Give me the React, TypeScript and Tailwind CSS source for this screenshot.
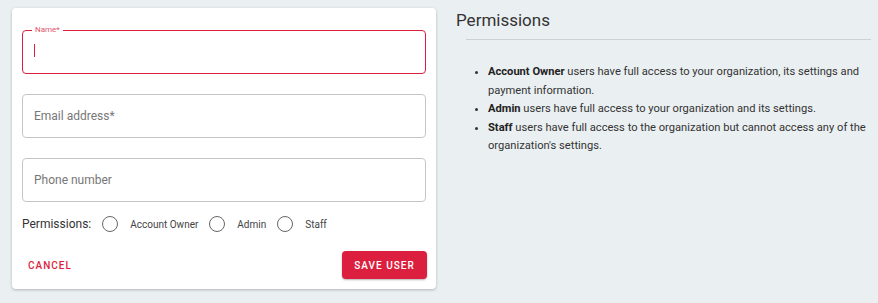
import React from "react";

const Field = ({ label, active }: { label: string; active?: boolean }) => {
  if (active) {
    return (
      <div className="relative h-[44px] rounded-[4px] border border-[#dc1f3e]">
        <span className="absolute left-[9px] top-[-6px] bg-white px-[3px] text-[8px] leading-[10px] text-[#e0566c]">
          {label}
        </span>
        <div className="ml-[11px] mt-[13px] h-[13px] w-px bg-[#dc1f3e]" />
      </div>
    );
  }
  return (
    <div className="flex h-[44px] items-center rounded-[4px] border border-[#c6c6c6] px-[11px] text-[12px] text-[#777]">
      {label}
    </div>
  );
};

const Radio = ({ label }: { label: string }) => (
  <label className="flex items-center">
    <span className="h-[16px] w-[16px] rounded-full border border-[#666]" />
    <span className="ml-[12px] mr-[11px] text-[10px] text-[#444]">{label}</span>
  </label>
);

export default function App() {
  return (
    <div
      className="flex h-[303px] w-[878px] items-start bg-[#eaeff2] pl-[12px] pt-[8px]"
      style={{ fontFamily: "Roboto, 'Liberation Sans', sans-serif" }}
    >
      <div className="w-[424px] rounded-[4px] bg-white px-[10px] pb-[10px] pt-[22px] shadow-[0_1px_3px_rgba(0,0,0,0.25)]">
        <div className="flex flex-col gap-[20px]">
          <Field label="Name*" active />
          <Field label="Email address*" />
          <Field label="Phone number" />
        </div>
        <div className="mt-[14px] flex h-[16px] items-center">
          <span className="mr-[11px] text-[12px] text-[#333]">Permissions:</span>
          <Radio label="Account Owner" />
          <Radio label="Admin" />
          <Radio label="Staff" />
        </div>
        <div className="mt-[19px] flex items-center justify-between">
          <button className="ml-[6px] text-[10px] font-medium tracking-[1px] text-[#dc1f3e]">CANCEL</button>
          <button className="mr-[-1px] h-[28px] w-[85px] rounded-[4px] bg-[#dc1f3e] text-[10px] font-medium tracking-[1px] text-white shadow-[0_1px_2px_rgba(0,0,0,0.3)]">
            SAVE USER
          </button>
        </div>
      </div>
      <div className="ml-[20px] flex-1 pr-[7px]">
        <h2 className="mt-[1px] text-[17px] leading-[22px] text-[#333]">Permissions</h2>
        <div className="ml-[10px] mt-[8px] border-t border-[#cdd1d5]" />
        <ul className="ml-[32px] mt-[23px] list-disc pr-[4px] text-[11.15px] leading-[18.5px] text-[#333]">
          <li>
            <b className="font-bold text-[#222]">Account Owner</b> users have full access to your organization, its settings and
            payment information.
          </li>
          <li>
            <b className="font-bold text-[#222]">Admin</b> users have full access to your organization and its settings.
          </li>
          <li>
            <b className="font-bold text-[#222]">Staff</b> users have full access to the organization but cannot access any of the
            organization's settings.
          </li>
        </ul>
      </div>
    </div>
  );
}
